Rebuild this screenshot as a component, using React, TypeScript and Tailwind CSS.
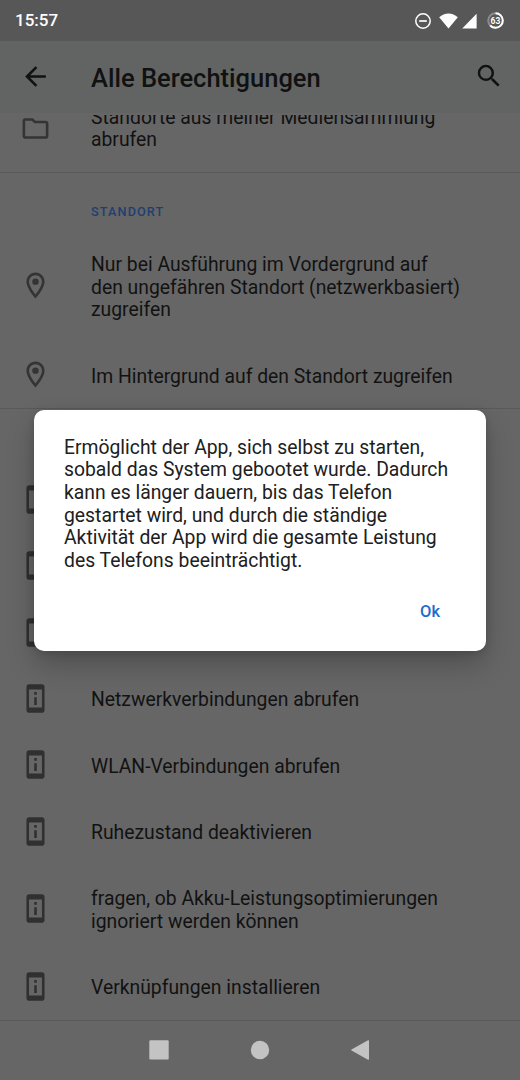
import type { ReactNode } from "react";

type IconName = "folder" | "pin" | "device";

type Permission = {
  icon: IconName;
  lines: string[];
};

const locationPermissions: Permission[] = [
  {
    icon: "pin",
    lines: [
      "Nur bei Ausführung im Vordergrund auf",
      "den ungefähren Standort (netzwerkbasiert)",
      "zugreifen",
    ],
  },
  { icon: "pin", lines: ["Im Hintergrund auf den Standort zugreifen"] },
];

const otherPermissions: Permission[] = [
  { icon: "device", lines: [""] },
  { icon: "device", lines: [""] },
  { icon: "device", lines: [""] },
  { icon: "device", lines: ["Netzwerkverbindungen abrufen"] },
  { icon: "device", lines: ["WLAN-Verbindungen abrufen"] },
  { icon: "device", lines: ["Ruhezustand deaktivieren"] },
  {
    icon: "device",
    lines: ["fragen, ob Akku-Leistungsoptimierungen", "ignoriert werden können"],
  },
  { icon: "device", lines: ["Verknüpfungen installieren"] },
];

const dialogLines = [
  "Ermöglicht der App, sich selbst zu starten,",
  "sobald das System gebootet wurde. Dadurch",
  "kann es länger dauern, bis das Telefon",
  "gestartet wird, und durch die ständige",
  "Aktivität der App wird die gesamte Leistung",
  "des Telefons beeinträchtigt.",
];

const iconPaths: Record<IconName, string> = {
  folder:
    "M9.17 6l2 2H20v10H4V6h5.17M10 4H4c-1.1 0-1.99.9-1.99 2L2 18c0 1.1.9 2 2 2h16c1.1 0 2-.9 2-2V8c0-1.1-.9-2-2-2h-8l-2-2z",
  pin: "M12 2C8.13 2 5 5.13 5 9c0 5.25 7 13 7 13s7-7.75 7-13c0-3.87-3.13-7-7-7zM7 9c0-2.76 2.24-5 5-5s5 2.24 5 5c0 2.88-2.88 7.19-5 9.88C9.92 16.21 7 11.85 7 9zm5-2.5a2.5 2.5 0 1 0 0 5 2.5 2.5 0 0 0 0-5z",
  device:
    "M13 7h-2v2h2V7zm0 4h-2v6h2v-6zm4-9.99L7 1c-1.1 0-2 .9-2 2v18c0 1.1.9 2 2 2h10c1.1 0 2-.9 2-2V3c0-1.1-.9-1.99-2-1.99zM17 19H7V5h10v14z",
};

const iconStyles: Record<IconName, string> = {
  folder: "mb-[2px] size-[31px] text-[#343434]",
  pin: "mb-[6px] size-[31px] text-[#343434]",
  device: "mb-[4.4px] size-[31px] text-[#303030]",
};

function Icon({ path, className }: { path: string; className?: string }) {
  return (
    <svg viewBox="0 0 24 24" fill="currentColor" className={className}>
      <path d={path} />
    </svg>
  );
}

function StatusBar() {
  return (
    <div className="flex h-[41px] shrink-0 items-center justify-between bg-[#575757] pl-[15px] pr-4 text-white">
      <span className="pt-px text-[17px] font-medium">15:57</span>
      <div className="flex items-center">
        <svg viewBox="0 0 16 16" className="size-4" fill="none" stroke="currentColor">
          <circle cx="8" cy="8" r="7.2" strokeWidth="1.5" />
          <path d="M4.2 8h7.6" strokeWidth="1.7" />
        </svg>
        <svg viewBox="0 0 19 16" className="ml-2 h-4 w-[19px]" fill="currentColor">
          <path d="M9.5 15.6L.2 4.2C2.8 1.8 6 .4 9.5.4s6.7 1.4 9.3 3.8z" />
        </svg>
        <svg viewBox="0 0 15 16" className="ml-1 h-4 w-[15px]" fill="currentColor">
          <path d="M14.6.8v14.7H.2z" />
        </svg>
        <div className="relative ml-2.5 flex size-[17px] items-center justify-center">
          <svg viewBox="0 0 17 17" className="absolute inset-0" fill="none" strokeWidth="2">
            <circle cx="8.5" cy="8.5" r="7.3" stroke="#8c8c8c" />
            <circle
              cx="8.5"
              cy="8.5"
              r="7.3"
              stroke="#fff"
              pathLength="100"
              strokeDasharray="63 37"
              transform="rotate(-90 8.5 8.5)"
            />
          </svg>
          <span className="pt-px text-[8.5px] leading-none font-bold">63</span>
        </div>
      </div>
    </div>
  );
}

function AppBar() {
  return (
    <header className="flex h-[72px] shrink-0 items-center bg-[#626463] pr-4 pl-5 text-[#101111]">
      <Icon
        path="M20 11H7.83l5.59-5.59L12 4l-8 8 8 8 1.41-1.41L7.83 13H20v-2z"
        className="mb-px size-[31px]"
      />
      <h1 className="ml-10 flex-1 pt-0.5 text-[25.5px] font-medium">Alle Berechtigungen</h1>
      <Icon
        path="M15.5 14h-.79l-.28-.27A6.471 6.471 0 0 0 16 9.5 6.5 6.5 0 1 0 9.5 16c1.61 0 3.09-.59 4.23-1.57l.27.28v.79l5 4.99L20.49 19l-4.99-5zm-6 0C7.01 14 5 11.99 5 9.5S7.01 5 9.5 5 14 7.01 14 9.5 11.99 14 9.5 14z"
        className="mb-0.5 size-[30px]"
      />
    </header>
  );
}

function PermissionRow({ icon, lines }: Permission) {
  return (
    <div className="flex min-h-[66.3px] items-center pt-[22.4px] pb-[21.2px] pl-5">
      <div className="flex h-0 items-center">
        <Icon path={iconPaths[icon]} className={iconStyles[icon]} />
      </div>
      <div className="ml-10 text-[19.33px] leading-[22.7px] whitespace-nowrap text-[#121212]">
        {lines.map((line, i) => (
          <p key={i}>{line}</p>
        ))}
      </div>
    </div>
  );
}

function Section({ title, children }: { title?: string; children: ReactNode }) {
  return (
    <section className="-mt-[1.2px] border-t border-[#595959]">
      <h2 className="flex h-[58.6px] items-center pt-[19px] pl-[91px] text-[12.7px] font-medium tracking-[1.1px] text-[#1f3f70]">
        {title}
      </h2>
      {children}
    </section>
  );
}

function Dialog() {
  return (
    <div className="absolute inset-x-[34px] top-[410px] h-[240.5px] rounded-[10px] bg-white pt-[26.6px] pr-[46px] pl-[30px] shadow-[0_14px_28px_rgba(0,0,0,0.22),0_2px_8px_rgba(0,0,0,0.15)]">
      <div className="text-[19.33px] leading-[22.7px] whitespace-nowrap text-[#202020]">
        {dialogLines.map((line) => (
          <p key={line}>{line}</p>
        ))}
      </div>
      <div className="mt-[29px] flex justify-end">
        <button className="text-[16.5px] leading-5 font-medium text-[#1c6dcd]">Ok</button>
      </div>
    </div>
  );
}

function NavigationBar() {
  return (
    <nav className="flex h-[60px] shrink-0 items-center justify-center border-t border-[#595959] pb-0.5 text-[#c3c3c3]">
      <svg viewBox="0 0 20 20" className="size-5" fill="currentColor">
        <rect x="0.3" y="0.3" width="19.4" height="19.2" rx="1.2" />
      </svg>
      <svg viewBox="0 0 20 20" className="mx-[81px] size-5" fill="currentColor">
        <circle cx="10" cy="10" r="9.2" />
      </svg>
      <svg viewBox="0 0 20 20" className="size-5" fill="currentColor">
        <path d="M17 0.3Q18 0 18 1v18Q18 20 17 19.7L0.5 10.5Q-.2 10 0.5 9.5z" />
      </svg>
    </nav>
  );
}

export default function App() {
  return (
    <div className="relative flex h-[1080px] w-[520px] flex-col overflow-hidden bg-[#666] font-[Roboto,sans-serif]">
      <StatusBar />
      <AppBar />
      {/* list is scrolled, so its first row sits partly under the app bar */}
      <main className="mt-0.5 min-h-0 flex-1 overflow-hidden">
        <div className="-mt-[30.8px]">
          <PermissionRow icon="folder" lines={["Standorte aus meiner Mediensammlung", "abrufen"]} />
          <Section title="STANDORT">
            {locationPermissions.map((permission, i) => (
              <PermissionRow key={i} {...permission} />
            ))}
          </Section>
          <Section>
            {otherPermissions.map((permission, i) => (
              <PermissionRow key={i} {...permission} />
            ))}
          </Section>
        </div>
      </main>
      <NavigationBar />
      <Dialog />
    </div>
  );
}
